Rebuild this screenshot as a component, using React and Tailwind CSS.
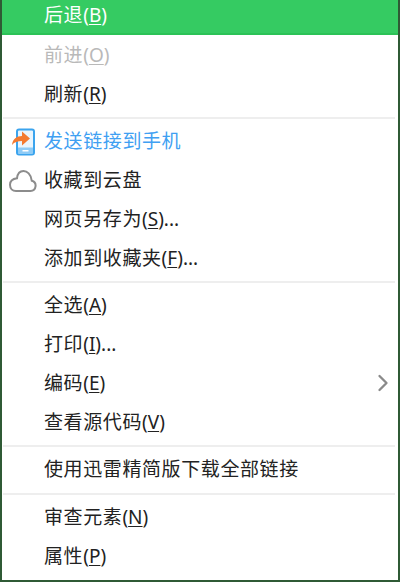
import { ChevronRight } from 'lucide-react';

const FONT = "font-['Noto_Sans','Noto_Sans_CJK_SC',sans-serif]";

function Item({ label, hotkey, after = '', color = 'text-[#222222]', icon, arrow }) {
  return (
    <div className={`relative flex h-[38.75px] items-center pl-[44px] text-[19px] leading-none ${color}`}>
      {icon && <span className="absolute left-[9px] top-1/2 -translate-y-1/2">{icon}</span>}
      <span className="whitespace-nowrap tracking-[0.6px]">
        {label}
        {hotkey && (
          <span className="tracking-normal">
            (<span className="underline underline-offset-2">{hotkey}</span>){after}
          </span>
        )}
      </span>
      {arrow && <ChevronRight className="absolute right-[1px] top-1/2 -translate-y-1/2 w-[28px] h-[28px] text-[#8a8a8a]" strokeWidth={2} />}
    </div>
  );
}

function Divider() {
  return <div className="mx-[3px] my-[3.5px] h-[2px] bg-[#eeeeee]" />;
}

function PhoneIcon() {
  return (
    <svg width="28" height="30" viewBox="0 0 28 30" className="block">
      <rect x="8" y="2.500" width="17" height="25" rx="2" fill="#eaf5fd" stroke="#3ba4ee" strokeWidth="2" />
      <rect x="9" y="20.500" width="15" height="6" fill="#8ecbf6" />
      <rect x="13.500" y="23" width="6" height="1.500" fill="#ffffff" />
      <path d="M3 18c.5-6 5-9 10-9V4.500l8 7-8 7v-4.500c-4.500 0-7.500 1-10 4z" fill="#f47a30" />
    </svg>
  );
}

function CloudIcon() {
  return (
    <svg width="28" height="24" viewBox="0 0 28 24" fill="none" stroke="#8c8c8c" strokeWidth="2" className="block">
      <path d="M7 22h14.500a5.200 5.200 0 0 0 1.300-10.200C22 5 18 2 14.500 2 11 2 8.500 5 8 9.300 2.500 10 1 13 1 15.800 1 19.500 3.500 22 7 22z" />
    </svg>
  );
}

export default function App() {
  return (
    <div className={`h-[582px] w-[400px] overflow-hidden bg-white border-x-[2px] border-b-[2px] border-[#2f5a35] ${FONT}`}>
      <div className="flex h-[35px] items-center bg-[#35cb62] border-b-[2px] border-[#2cc257] pb-[3px] pl-[42px] text-[19px] leading-none text-white">
        <span className="tracking-[0.6px]">后退<span className="tracking-normal">(<span className="underline underline-offset-2">B</span>)</span></span>
      </div>
      <div className="-ml-[2px] pt-[1px]">
        <Item label="前进" hotkey="O" color="text-[#b9b9b9]" />
        <Item label="刷新" hotkey="R" />
        <Divider />
        <Item label="发送链接到手机" color="text-[#3fa0f2]" icon={<PhoneIcon />} />
        <Item label="收藏到云盘" icon={<CloudIcon />} />
        <Item label="网页另存为" hotkey="S" after="..." />
        <Item label="添加到收藏夹" hotkey="F" after="..." />
        <Divider />
        <Item label="全选" hotkey="A" />
        <Item label="打印" hotkey="I" after="..." />
        <Item label="编码" hotkey="E" arrow />
        <Item label="查看源代码" hotkey="V" />
        <Divider />
        <Item label="使用迅雷精简版下载全部链接" />
        <Divider />
        <Item label="审查元素" hotkey="N" />
        <Item label="属性" hotkey="P" />
      </div>
    </div>
  );
}
